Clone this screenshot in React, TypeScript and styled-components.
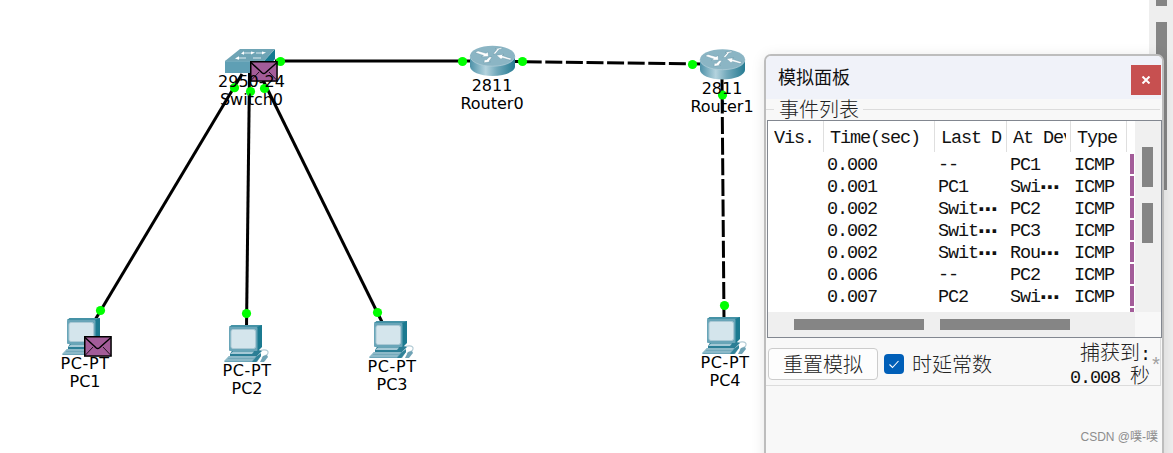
import React from 'react';
import styled, { createGlobalStyle } from 'styled-components';

const mono = `'Liberation Mono', 'Noto Sans CJK SC', monospace`;

const GlobalStyle = createGlobalStyle`
    body {
        margin: 0;
        background: #fff;
        overflow: hidden;
    }
    * {
        box-sizing: border-box;
    }
`

const Screen = styled.div`
    position: relative;
    width: 1173px;
    height: 453px;
    overflow: hidden;
    display: flex;
    justify-content: space-between;
    background: #fff;
`

const Workspace = styled.div`
    position: relative;
    width: 1149px;
    height: 453px;
    svg {
        display: block;
    }
`

const Label = styled.div<{ $x: number; $y: number; $spacing?: number }>`
    position: absolute;
    left: ${p => p.$x}px;
    top: ${p => p.$y}px;
    transform: translateX(-50%);
    font: 16px/18px 'DejaVu Sans', sans-serif;
    color: #000;
    text-align: center;
    white-space: nowrap;
    div:first-child {
        letter-spacing: ${p => p.$spacing || 0}px;
    }
`

const PageScroll = styled.div`
    width: 24px;
    padding-left: 7px;
    display: flex;
    flex-direction: column;
    gap: 16px;
    background: #eee;
`

const Thumb = styled.div<{ $w: number; $h: number }>`
    flex: none;
    width: ${p => p.$w}px;
    height: ${p => p.$h}px;
    background: #858585;
`

const Panel = styled.section`
    position: absolute;
    left: 764px;
    top: 54px;
    width: 400px;
    height: 410px;
    border: 2px solid #bdbdbd;
    border-radius: 7px 7px 0 0;
    background: #f8f8f8;
    overflow: hidden;
    box-shadow: 0 2px 14px rgba(0, 0, 0, 0.1);
    font: 18.5px/22px ${mono};
    letter-spacing: -1.1px;
    color: #111;
`

const TitleBar = styled.header`
    height: 43px;
    padding: 0 1px 0 12px;
    display: flex;
    align-items: center;
    justify-content: space-between;
    background: #f0f2f9;
    font: 18px/24px 'Noto Sans CJK SC', sans-serif;
    letter-spacing: 0;
    h1 {
        margin: 0 0 4px;
        font: inherit;
    }
    button {
        width: 30px;
        height: 30px;
        margin-top: 4px;
        padding: 0;
        border: 0;
        display: flex;
        align-items: center;
        justify-content: center;
        background: #c75050;
    }
`

const Cjk = styled.span`
    font: 300 20px/22px 'Noto Sans CJK SC', sans-serif;
    letter-spacing: 0;
    color: #222;
    white-space: nowrap;
`

const Legend = styled.div`
    height: 21px;
    padding-right: 2px;
    display: flex;
    align-items: center;
    &::before, &::after {
        content: '';
        height: 1px;
        background: #dcdcdc;
    }
    &::before {
        width: 8px;
    }
    &::after {
        flex: 1;
    }
    span {
        width: 89px;
        padding-left: 5px;
        margin-top: -2px;
    }
`

const Table = styled.div`
    width: 395px;
    height: 218px;
    margin-left: 1px;
    border: 1px solid #828790;
    display: grid;
    grid-template: 191px 25px / 367px 26px;
    background: #fff;
`

const Body = styled.div`
    overflow: hidden;
`

const columns = '56px 111px 72px 64px 56px 7px';

const HeadRow = styled.div`
    height: 33px;
    display: grid;
    grid-template-columns: ${columns};
    span {
        height: 31px;
        padding: 0 4px 0 6px;
        line-height: 36px;
        border-right: 1px solid #dfdfdf;
    }
    div {
        overflow: hidden;
        white-space: nowrap;
    }
`

const Row = styled.div`
    height: 22px;
    display: grid;
    grid-template-columns: ${columns};
    span {
        height: 22px;
        padding-left: 3px;
        line-height: 23px;
        white-space: pre;
    }
    i {
        width: 4px;
        height: 20px;
        margin-left: auto;
        background: #a35c99;
    }
`

// two-cell wide centred ellipsis
const Ellipsis = styled.b`
    display: inline-block;
    width: 20px;
    height: 22px;
    vertical-align: top;
    text-align: center;
    font: 700 20px/22px 'DejaVu Sans', sans-serif;
    letter-spacing: 0;
`

const VScroll = styled.div`
    padding: 26px 0 0 7px;
    display: flex;
    flex-direction: column;
    gap: 16px;
    background: #f0f0f0;
`

const HScroll = styled.div`
    padding: 7px 0 0 26px;
    display: flex;
    gap: 16px;
    background: #efefef;
`

const Corner = styled.div`
    background: #f8f8f8;
`

const Controls = styled.div`
    height: 48px;
    width: 395px;
    padding: 10px 0 0 2px;
    display: flex;
    align-items: flex-start;
    border: solid #dcdcdc;
    border-width: 0 1px 1px 0;
`

const Reset = styled.button`
    width: 110px;
    height: 32px;
    padding: 0;
    border: 1px solid #ccc;
    border-radius: 4px;
    background: #fdfdfd;
`

const Check = styled.div`
    width: 20px;
    height: 20px;
    margin: 6px 8px 0 6px;
    border-radius: 4px;
    background: #005fb8;
    svg {
        display: block;
    }
`

const Delay = styled.div`
    margin-top: 5px;
`

const Captured = styled.div`
    margin: -7px 0 0 auto;
    text-align: right;
    line-height: 23px;
    white-space: nowrap;
    div {
        height: 23px;
    }
`

const Star = styled.div`
    width: 10px;
    margin-top: 8px;
    font-size: 20px;
    color: #a0a0a0;
`

const Watermark = styled.div`
    position: absolute;
    right: 15px;
    bottom: 7px;
    font: 12px/18px 'Liberation Sans', 'Noto Sans CJK SC', sans-serif;
    color: #8d8d8d;
    white-space: nowrap;
`

interface Point {
    x: number;
    y: number;
}

function Pc({ x, y }: Point) {
    return (
    <g transform={`translate(${x} ${y})`}>
        <path d="M35 27c2-3 10-3 9 1 0 3-4 2-6 5" fill="none" stroke="#b5cdd6" strokeWidth="1.200" />
        <path d="M36 37l3-6 4-1 1 2-4 5z" fill="#6fa3b5" />
        <path d="M5 2l3-2h30v22l-5 5z" fill="#1b7a90" />
        <path d="M5 2l3-2h30l-5 2z" fill="#4592a6" />
        <path d="M9 24h22l7 2-5 5H6v-2z" fill="#2b7e95" />
        <path d="M6 29l3-2.500h21l-2 2.500z" fill="#a5c9d6" />
        <rect x="5" y="2" width="28.500" height="24" rx="1" fill="#69a5b8" />
        <rect x="7" y="4.500" width="24.500" height="19" rx="2" fill="#d4e5ec" stroke="#a9c8d4" />
        <path d="M5 31h32l-4 6H0z" fill="#6ca5b8" />
        <path d="M0 36l5-5h27l-4 5z" fill="#8cb9c8" />
        <path d="M4 33.500h26" stroke="#74a9ba" strokeWidth="1" />
        <path d="M28 37l5-6 4-3v3l-5 6z" fill="#2f8298" />
    </g>)
}

function Router({ x, y }: Point) {
    return (
    <g transform={`translate(${x} ${y})`}>
        <path d="M0 10v11c0 5 10 9.500 22.500 9.500S45 26 45 21V10z" fill="url(#routerSide)" />
        <ellipse cx="22.500" cy="10.500" rx="22.500" ry="10.200" fill="#8bb5c4" />
        <path d="M0 10.500c0 5.800 10 10.200 22.500 10.200S45 16.300 45 10.500" fill="none" stroke="#b5d0da" strokeWidth=".7" />
        <g fill="#fff" stroke="#477f92" strokeWidth=".3">
            <path d="M5 7l3-1.500 8 2.300 2-1.400.5 4.600-7 .2 2-1.300z" />
            <path d="M23 8.500l4-4.600-2-.5L32 2l-.5 1.400-2.500.5-3.500 4.400z" />
            <path d="M42 13.300l-2 1.200-7.500-2.100-1.500 1.300-4.500-4 7.500-1-2 1.400z" />
            <path d="M22 11.500l-3 4.300 1.500.5-6.500 1 .5-3.200 1.800.4 3-3z" />
        </g>
    </g>)
}

function Switch({ x, y }: Point) {
    return (
    <g transform={`translate(${x} ${y})`}>
        <path d="M39 12L50 0v10L39 24z" fill="#147a91" />
        <path d="M0 12L15 0h35L39 12z" fill="#6ea4b5" />
        <path d="M0 12h39v12H0z" fill="#5f9fb4" />
        <path d="M0 12.300h39" stroke="#82b3c3" strokeWidth=".7" />
        <g fill="none" stroke="#dcebf0" strokeWidth="1">
            <path d="M18 4h9M13 9h8M31 4h7M28 9h8" />
        </g>
        <g fill="#fff">
            <path d="M16 4.500l3-2.300v3.500zM26 2.500l4 1-4 2zM10 9.500l4-2.300v3.500zM37 2.500l4 1-4 2z" />
        </g>
    </g>)
}

function Envelope({ x, y }: Point) {
    return (
    <g transform={`translate(${x} ${y})`}>
        <rect x=".75" y=".75" width="26.300" height="19.300" fill="#a35c99" stroke="#000" strokeWidth="1.500" />
        <path d="M1 1.500l11 10.300c1 .8 2.500.8 3.500 0L27 1.500" fill="none" stroke="#000" strokeWidth="1.400" />
        <path d="M1 19.500L9 11M27 19.500L19 11" fill="none" stroke="#000" strokeWidth=".8" />
    </g>)
}

const links = [
    { d: 'M275 61H470' },
    { d: 'M242 74L95 320' },
    { d: 'M249.500 72L246.500 328' },
    { d: 'M259 72L382 322' },
    { d: 'M512 61.500L702 64', dash: '17 3.600', offset: 7.9 },
    { d: 'M722 78L724 320', dash: '17 3.600', offset: 2.1 },
];

const dots = [
    [280.5, 61.5], [234.5, 87.7], [250.5, 91.5], [264.5, 88.5],
    [100.5, 310.5], [246.5, 313.5], [377.5, 312.5], [462.5, 61.5],
    [522.5, 61.5], [692.5, 64.5], [722.5, 95], [724.5, 305.5],
];

const labels = [
    { x: 251.5, y: 73, model: '2950-24', name: 'Switch0' },
    { x: 492, y: 77, model: '2811', name: 'Router0' },
    { x: 722, y: 80, model: '2811', name: 'Router1' },
    { x: 85, y: 355, model: 'PC-PT', name: 'PC1', spacing: 0.6 },
    { x: 247, y: 362, model: 'PC-PT', name: 'PC2', spacing: 0.6 },
    { x: 392, y: 358, model: 'PC-PT', name: 'PC3', spacing: 0.6 },
    { x: 725, y: 354, model: 'PC-PT', name: 'PC4', spacing: 0.6 },
];

const events = [
    ['0.000', '--', 'PC1'],
    ['0.001', 'PC1', 'Swi…'],
    ['0.002', 'Swit…', 'PC2'],
    ['0.002', 'Swit…', 'PC3'],
    ['0.002', 'Swit…', 'Rou…'],
    ['0.006', '--', 'PC2'],
    ['0.007', 'PC2', 'Swi…'],
];

function Cell({ text }: { text: string }) {
    return (
    <span>
        {text.replace('…', '')}
        {text.endsWith('…') && <Ellipsis>⋯</Ellipsis>}
    </span>)
}

function Topology() {
    return (
    <Workspace>
        <svg width="1149" height="453">
            <defs>
                <linearGradient id="routerSide">
                    <stop offset="0" stopColor="#4d91a8" />
                    <stop offset=".35" stopColor="#b4d3de" />
                    <stop offset=".6" stopColor="#72a9bb" />
                    <stop offset="1" stopColor="#267b92" />
                </linearGradient>
            </defs>
            {links.map(link => <path
                key={link.d}
                d={link.d}
                stroke="#000"
                strokeWidth="3"
                strokeDasharray={link.dash}
                strokeDashoffset={link.offset}
            />)}
            {dots.map(([x, y]) => <circle key={`${x}-${y}`} cx={x} cy={y} r="4.600" fill="#0f0" />)}
            <Switch x={225} y={49} />
            <Router x={470} y={45.5} />
            <Router x={700} y={49} />
            <Pc x={62} y={318} />
            <Pc x={224} y={325} />
            <Pc x={369} y={321} />
            <Pc x={702} y={317} />
            <Envelope x={250} y={61} />
            <Envelope x={84} y={336} />
        </svg>
        {labels.map(label => <Label key={label.name} $x={label.x} $y={label.y} $spacing={label.spacing}>
            <div>{label.model}</div>
            <div>{label.name}</div>
        </Label>)}
    </Workspace>)
}

function EventTable() {
    return (
    <Table>
        <Body>
            <HeadRow>
                {['Vis.', 'Time(sec)', 'Last D', 'At Dev', 'Type'].map(title => <span key={title}>
                    <div>{title}</div>
                </span>)}
            </HeadRow>
            {events.map(([time, last, at], i) => <Row key={i}>
                <span />
                <Cell text={time} />
                <Cell text={last} />
                <Cell text={at} />
                <Cell text="ICMP" />
                <i />
            </Row>)}
            <Row>
                <span /><span /><span /><span /><span />
                <i />
            </Row>
        </Body>
        <VScroll>
            <Thumb $w={11} $h={40} />
            <Thumb $w={11} $h={40} />
        </VScroll>
        <HScroll>
            <Thumb $w={130} $h={11} />
            <Thumb $w={130} $h={11} />
        </HScroll>
        <Corner />
    </Table>)
}

function App() {
    return (
    <>
        <GlobalStyle />
        <Screen>
            <Topology />
            <PageScroll>
                <Thumb $w={11} $h={6} />
                <Thumb $w={11} $h={168} />
            </PageScroll>
            <Panel>
                <TitleBar>
                    <h1>模拟面板</h1>
                    <button aria-label="close">
                        <svg width="10" height="8" viewBox="0 0 10 8">
                            <path d="M1.500.5l7 7M8.500.5l-7 7" stroke="#fff" strokeWidth="2" />
                        </svg>
                    </button>
                </TitleBar>
                <Legend><Cjk>事件列表</Cjk></Legend>
                <EventTable />
                <Controls>
                    <Reset><Cjk>重置模拟</Cjk></Reset>
                    <Check>
                        <svg width="20" height="20">
                            <path d="M5.500 10.500l3 3 6-6.500" fill="none" stroke="#fff" strokeWidth="1.100" />
                        </svg>
                    </Check>
                    <Delay><Cjk>时延常数</Cjk></Delay>
                    <Captured>
                        <div><Cjk>捕获到</Cjk>:</div>
                        <div>0.008 <Cjk>秒</Cjk></div>
                    </Captured>
                    <Star>*</Star>
                </Controls>
            </Panel>
            <Watermark>CSDN @噗-噗</Watermark>
        </Screen>
    </>)
}

export default App;
